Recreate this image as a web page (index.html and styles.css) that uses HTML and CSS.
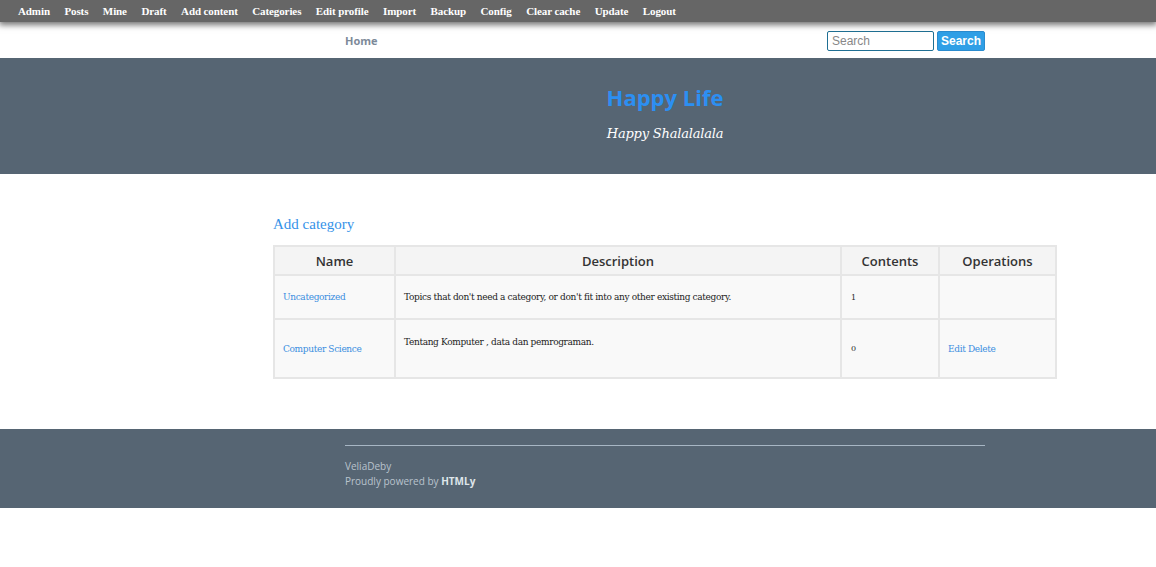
FILE: index.html
```html
<!DOCTYPE html>
<html>
<head>
<meta charset="utf-8">
<link rel="stylesheet" href="styles.css">
</head>
<body>
<div class="toolbar">
  <a>Admin</a><a>Posts</a><a>Mine</a><a>Draft</a><a>Add content</a><a>Categories</a><a>Edit profile</a><a>Import</a><a>Backup</a><a>Config</a><a>Clear cache</a><a>Update</a><a>Logout</a>
</div>
<div class="nav">
  <div class="wrap navrow">
    <a class="home">Home</a>
    <form class="search">
      <input class="search-input" placeholder="Search">
      <button class="search-btn" type="button">Search</button>
    </form>
  </div>
</div>
<div class="hero">
  <div class="wrap heroinner">
    <h1 class="title">Happy Life</h1>
    <p class="tagline">Happy Shalalalala</p>
  </div>
</div>
<div class="main">
  <a class="addcat">Add category</a>
  <table class="cats">
    <thead>
      <tr><th class="c-name">Name</th><th class="c-desc">Description</th><th class="c-cnt">Contents</th><th class="c-op">Operations</th></tr>
    </thead>
    <tbody>
      <tr class="r1">
        <td><a class="lnk">Uncategorized</a></td>
        <td>Topics that don't need a category, or don't fit into any other existing category.</td>
        <td class="num">1</td>
        <td></td>
      </tr>
      <tr class="r2">
        <td><a class="lnk">Computer Science</a></td>
        <td><div class="desc2">Tentang Komputer , data dan pemrograman.</div></td>
        <td class="num">0</td>
        <td><a class="lnk">Edit</a> <a class="lnk">Delete</a></td>
      </tr>
    </tbody>
  </table>
</div>
<div class="footer">
  <div class="wrap footinner">
    <div class="copy">VeliaDeby</div>
    <div class="copy">Proudly powered by <b>HTMLy</b></div>
  </div>
</div>
</body>
</html>
```
FILE: styles.css
```css
html, body { margin: 0; padding: 0; background: #fff; }
body { font-family: "Liberation Serif", Georgia, serif; }

.toolbar {
  background: #666666;
  height: 22px;
  display: flex;
  align-items: center;
  padding-left: 18px;
  box-shadow: 0 2px 6px 1px rgba(0,0,0,0.55);
  position: relative;
  z-index: 2;
}
.toolbar a {
  color: #fff;
  font-family: "Liberation Serif", Georgia, serif;
  font-weight: bold;
  font-size: 11px;
  margin-right: 14.5px;
  letter-spacing: -0.1px;
}

.wrap { width: 640px; margin-left: 345px; }

.nav { height: 36px; background: #fff; }
.navrow {
  display: flex;
  align-items: center;
  justify-content: space-between;
  height: 36px;
  padding-top: 1px;
  box-sizing: border-box;
}
.home {
  font-family: "Open Sans", sans-serif;
  font-weight: bold;
  font-size: 11px;
  color: #7d8a99;
}
.search { display: flex; gap: 3px; align-items: center; margin: 0; }
.search-input {
  width: 107px;
  height: 20px;
  box-sizing: border-box;
  border: 1px solid #1f6f93;
  border-radius: 2px;
  padding: 0 4px;
  font-family: "Liberation Sans", Arial, sans-serif;
  font-size: 12px;
  color: #333;
}
.search-input::placeholder { color: #888; }
.search-btn {
  width: 48px;
  height: 20px;
  box-sizing: border-box;
  border: 1px solid #2a8ccf;
  border-radius: 2px;
  background: #2f9fe6;
  color: #fff;
  font-family: "Liberation Sans", Arial, sans-serif;
  font-weight: bold;
  font-size: 12px;
  padding: 0;
}

.hero { background: #566573; height: 116px; }
.heroinner {
  display: flex;
  flex-direction: column;
  align-items: center;
  padding-top: 24px;
}
.title {
  margin: 0;
  font-family: "Open Sans", sans-serif;
  font-weight: bold;
  font-size: 22px;
  line-height: 30px;
  color: #2c8ff2;
}
.tagline {
  margin: 14px 0 0;
  font-family: "DejaVu Serif", Georgia, serif;
  font-style: italic;
  font-size: 13px;
  color: #fff;
  letter-spacing: -0.2px;
}

.main {
  margin-left: 273px;
  width: 784px;
  padding-top: 40px;
  padding-bottom: 50px;
}
.addcat {
  display: block;
  font-family: "Liberation Serif", Georgia, serif;
  font-size: 15px;
  color: #3592e8;
  line-height: 20px;
  margin-bottom: 11px;
}
.cats {
  width: 784px;
  border-collapse: collapse;
  border: 2px solid #dedede;
  background: #f9f9f9;
  table-layout: fixed;
}
.cats th, .cats td { border: 2px solid #e6e6e6; }
.cats th {
  background: #f4f4f4;
  font-family: "Open Sans", sans-serif;
  font-weight: 600;
  font-size: 13px;
  color: #333;
  height: 27px;
  padding: 0;
}
.c-name { width: 119px; }
.c-desc { width: 444px; }
.c-cnt { width: 96px; }
.c-op { width: auto; }
.cats td {
  font-family: "DejaVu Serif", Georgia, serif;
  font-size: 9px;
  color: #222;
  padding: 0 8px;
  vertical-align: middle;
  letter-spacing: -0.35px;
}
.r1 td { height: 42px; }
.r2 td { height: 57px; }
.desc2 { padding-bottom: 14px; }
.cats td.num { font-size: 8px; padding-left: 9px; color: #2a2a2a; }
.lnk { color: #3a8ee0; }

.footer { background: #566573; height: 79px; }
.footinner {
  border-top: 1px solid #a7b6c4;
  margin-top: 16px;
  padding-top: 13px;
  display: inline-block;
  box-sizing: border-box;
}
.copy {
  font-family: "Open Sans", sans-serif;
  font-size: 10px;
  color: #b9c3cd;
  line-height: 15px;
}
.copy b { color: #dfe5ea; }
```
